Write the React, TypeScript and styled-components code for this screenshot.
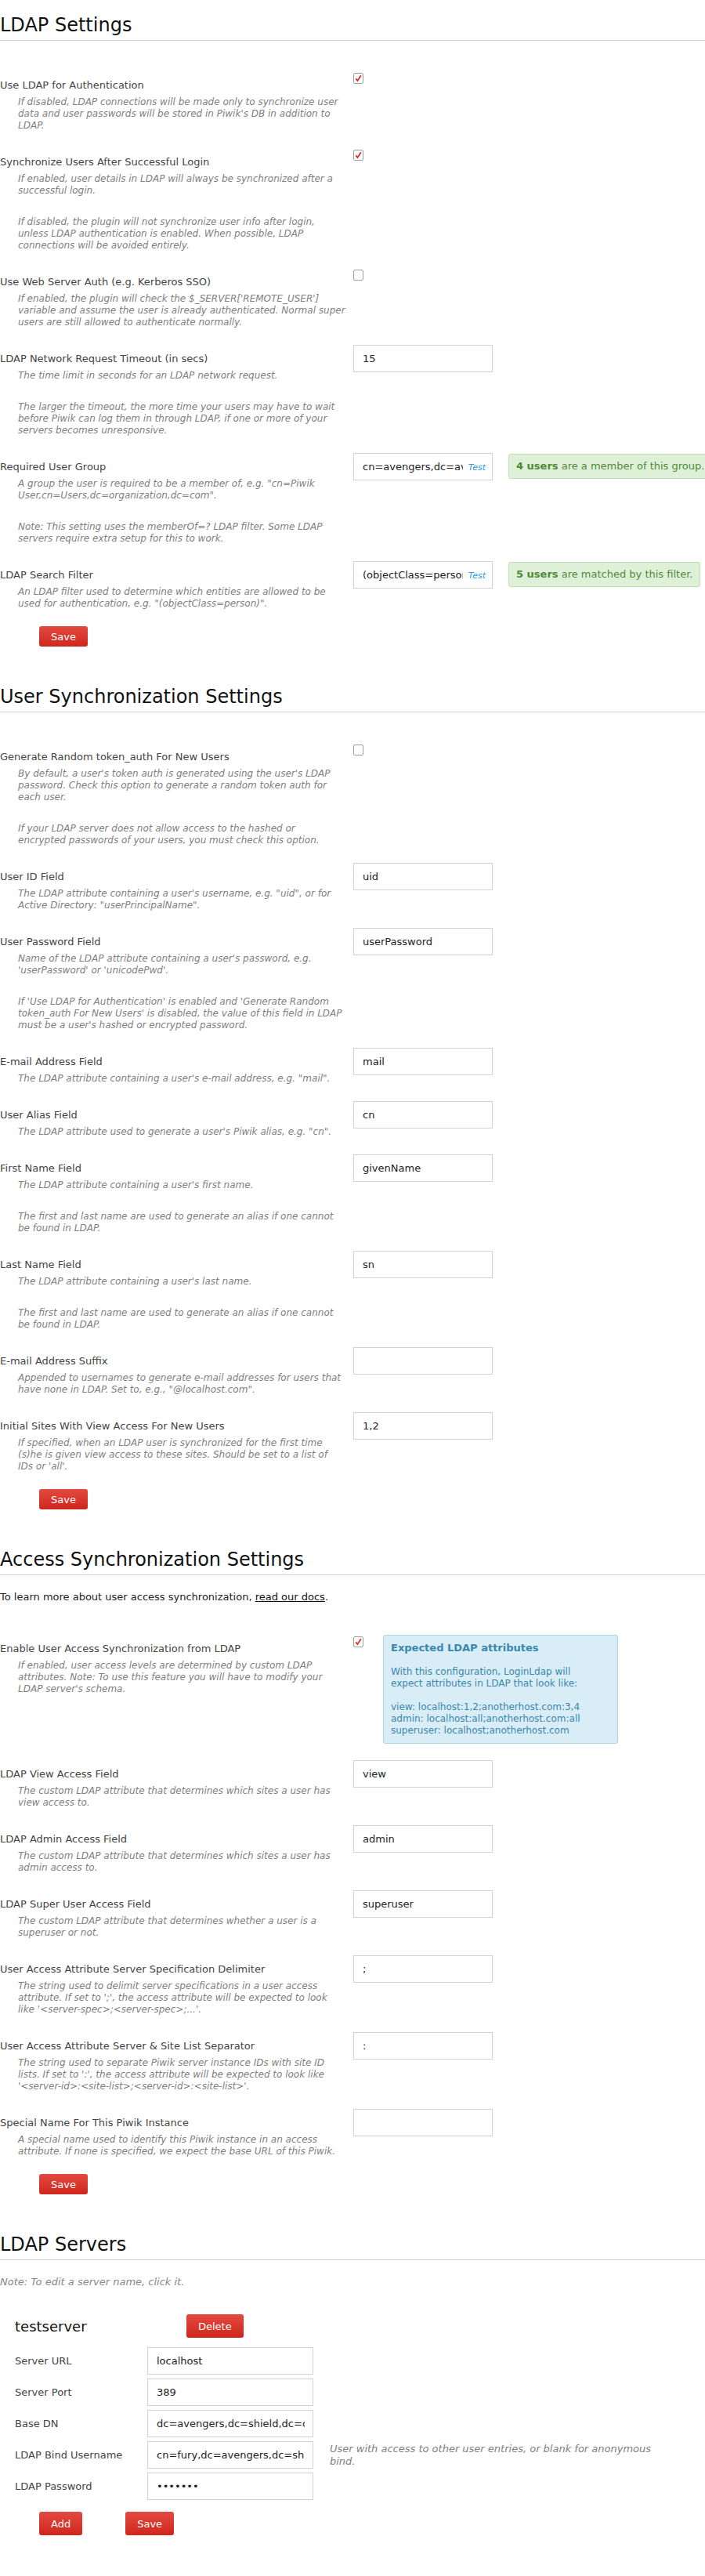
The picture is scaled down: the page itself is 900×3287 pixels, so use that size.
import type { ReactNode } from "react";
import styled, { createGlobalStyle } from "styled-components";

type Field = {
  label: string;
  help: string[];
  checkbox?: boolean;
  checked?: boolean;
  value?: string;
  test?: boolean;
  result?: ReactNode;
  notice?: boolean;
};

// help paragraphs keep the line breaks of the original form
const ldapSettings: Field[] = [
  {
    label: "Use LDAP for Authentication",
    checkbox: true,
    checked: true,
    help: [
      "If disabled, LDAP connections will be made only to synchronize user\ndata and user passwords will be stored in Piwik's DB in addition to\nLDAP.",
    ],
  },
  {
    label: "Synchronize Users After Successful Login",
    checkbox: true,
    checked: true,
    help: [
      "If enabled, user details in LDAP will always be synchronized after a\nsuccessful login.",
      "If disabled, the plugin will not synchronize user info after login,\nunless LDAP authentication is enabled. When possible, LDAP\nconnections will be avoided entirely.",
    ],
  },
  {
    label: "Use Web Server Auth (e.g. Kerberos SSO)",
    checkbox: true,
    help: [
      "If enabled, the plugin will check the $_SERVER['REMOTE_USER']\nvariable and assume the user is already authenticated. Normal super\nusers are still allowed to authenticate normally.",
    ],
  },
  {
    label: "LDAP Network Request Timeout (in secs)",
    value: "15",
    help: [
      "The time limit in seconds for an LDAP network request.",
      "The larger the timeout, the more time your users may have to wait\nbefore Piwik can log them in through LDAP, if one or more of your\nservers becomes unresponsive.",
    ],
  },
  {
    label: "Required User Group",
    value: "cn=avengers,dc=avengers,dc=shield,dc=org",
    test: true,
    result: (
      <>
        <strong>4 users</strong> are a member of this group.
      </>
    ),
    help: [
      'A group the user is required to be a member of, e.g. "cn=Piwik\nUser,cn=Users,dc=organization,dc=com".',
      "Note: This setting uses the memberOf=? LDAP filter. Some LDAP\nservers require extra setup for this to work.",
    ],
  },
  {
    label: "LDAP Search Filter",
    value: "(objectClass=person)",
    test: true,
    result: (
      <>
        <strong>5 users</strong> are matched by this filter.
      </>
    ),
    help: [
      'An LDAP filter used to determine which entities are allowed to be\nused for authentication, e.g. "(objectClass=person)".',
    ],
  },
];

const userSyncSettings: Field[] = [
  {
    label: "Generate Random token_auth For New Users",
    checkbox: true,
    help: [
      "By default, a user's token auth is generated using the user's LDAP\npassword. Check this option to generate a random token auth for\neach user.",
      "If your LDAP server does not allow access to the hashed or\nencrypted passwords of your users, you must check this option.",
    ],
  },
  {
    label: "User ID Field",
    value: "uid",
    help: [
      'The LDAP attribute containing a user\'s username, e.g. "uid", or for\nActive Directory: "userPrincipalName".',
    ],
  },
  {
    label: "User Password Field",
    value: "userPassword",
    help: [
      "Name of the LDAP attribute containing a user's password, e.g.\n'userPassword' or 'unicodePwd'.",
      "If 'Use LDAP for Authentication' is enabled and 'Generate Random\ntoken_auth For New Users' is disabled, the value of this field in LDAP\nmust be a user's hashed or encrypted password.",
    ],
  },
  {
    label: "E-mail Address Field",
    value: "mail",
    help: ['The LDAP attribute containing a user\'s e-mail address, e.g. "mail".'],
  },
  {
    label: "User Alias Field",
    value: "cn",
    help: ['The LDAP attribute used to generate a user\'s Piwik alias, e.g. "cn".'],
  },
  {
    label: "First Name Field",
    value: "givenName",
    help: [
      "The LDAP attribute containing a user's first name.",
      "The first and last name are used to generate an alias if one cannot\nbe found in LDAP.",
    ],
  },
  {
    label: "Last Name Field",
    value: "sn",
    help: [
      "The LDAP attribute containing a user's last name.",
      "The first and last name are used to generate an alias if one cannot\nbe found in LDAP.",
    ],
  },
  {
    label: "E-mail Address Suffix",
    value: "",
    help: [
      'Appended to usernames to generate e-mail addresses for users that\nhave none in LDAP. Set to, e.g., "@localhost.com".',
    ],
  },
  {
    label: "Initial Sites With View Access For New Users",
    value: "1,2",
    help: [
      "If specified, when an LDAP user is synchronized for the first time\n(s)he is given view access to these sites. Should be set to a list of\nIDs or 'all'.",
    ],
  },
];

const accessSyncSettings: Field[] = [
  {
    label: "Enable User Access Synchronization from LDAP",
    checkbox: true,
    checked: true,
    notice: true,
    help: [
      "If enabled, user access levels are determined by custom LDAP\nattributes. Note: To use this feature you will have to modify your\nLDAP server's schema.",
    ],
  },
  {
    label: "LDAP View Access Field",
    value: "view",
    help: ["The custom LDAP attribute that determines which sites a user has\nview access to."],
  },
  {
    label: "LDAP Admin Access Field",
    value: "admin",
    help: ["The custom LDAP attribute that determines which sites a user has\nadmin access to."],
  },
  {
    label: "LDAP Super User Access Field",
    value: "superuser",
    help: ["The custom LDAP attribute that determines whether a user is a\nsuperuser or not."],
  },
  {
    label: "User Access Attribute Server Specification Delimiter",
    value: ";",
    help: [
      "The string used to delimit server specifications in a user access\nattribute. If set to ';', the access attribute will be expected to look\nlike '<server-spec>;<server-spec>;...'.",
    ],
  },
  {
    label: "User Access Attribute Server & Site List Separator",
    value: ":",
    help: [
      "The string used to separate Piwik server instance IDs with site ID\nlists. If set to ':', the access attribute will be expected to look like\n'<server-id>:<site-list>;<server-id>:<site-list>'.",
    ],
  },
  {
    label: "Special Name For This Piwik Instance",
    value: "",
    help: [
      "A special name used to identify this Piwik instance in an access\nattribute. If none is specified, we expect the base URL of this Piwik.",
    ],
  },
];

const serverFields = [
  { label: "Server URL", value: "localhost" },
  { label: "Server Port", value: "389" },
  { label: "Base DN", value: "dc=avengers,dc=shield,dc=org" },
  {
    label: "LDAP Bind Username",
    value: "cn=fury,dc=avengers,dc=shield,dc=org",
    help: "User with access to other user entries, or blank for anonymous\nbind.",
  },
  { label: "LDAP Password", value: "secrets", password: true },
];

const CheckMark = () => (
  <svg width="13" height="14" viewBox="0 0 13 14">
    <path d="M3.2 7.2 L5.4 10 L9.8 3.2" fill="none" stroke="#d62a1f" strokeWidth="1.7" />
  </svg>
);

const SettingRow = ({ field }: { field: Field }) => (
  <Row>
    <FieldText>
      <Label>{field.label}</Label>
      <Help>
        {field.help.map((p, i) => (
          <HelpPara key={i}>{p}</HelpPara>
        ))}
      </Help>
    </FieldText>
    <Control>
      {field.checkbox ? (
        <Checkbox role="checkbox" aria-checked={!!field.checked}>
          {field.checked && <CheckMark />}
        </Checkbox>
      ) : (
        <InputWrap>
          <TextInput $withTest={!!field.test} value={field.value} readOnly />
          {field.test && <TestLink>Test</TestLink>}
        </InputWrap>
      )}
      {field.result && <Result>{field.result}</Result>}
      {field.notice && (
        <InfoBox>
          <InfoTitle>Expected LDAP attributes</InfoTitle>
          With this configuration, LoginLdap will
          <br />
          expect attributes in LDAP that look like:
          <br />
          <br />
          view: localhost:1,2;anotherhost.com:3,4
          <br />
          admin: localhost:all;anotherhost.com:all
          <br />
          superuser: localhost;anotherhost.com
        </InfoBox>
      )}
    </Control>
  </Row>
);

const App = () => {
  return (
    <>
      <GlobalStyle />
      <Page>
        <Section>
          <Heading>LDAP Settings</Heading>
          <Rows>
            {ldapSettings.map((f) => (
              <SettingRow key={f.label} field={f} />
            ))}
          </Rows>
          <SaveBar>
            <Button>Save</Button>
          </SaveBar>
        </Section>

        <Section>
          <Heading>User Synchronization Settings</Heading>
          <Rows>
            {userSyncSettings.map((f) => (
              <SettingRow key={f.label} field={f} />
            ))}
          </Rows>
          <SaveBar>
            <Button>Save</Button>
          </SaveBar>
        </Section>

        <Section>
          <Heading>Access Synchronization Settings</Heading>
          <Intro>
            To learn more about user access synchronization, <DocLink href="#">read our docs</DocLink>.
          </Intro>
          <Rows>
            {accessSyncSettings.map((f) => (
              <SettingRow key={f.label} field={f} />
            ))}
          </Rows>
          <SaveBar>
            <Button>Save</Button>
          </SaveBar>
        </Section>

        <Section>
          <Heading>LDAP Servers</Heading>
          <Intro $note>Note: To edit a server name, click it.</Intro>
          <ServerHeader>
            <ServerName>testserver</ServerName>
            <Button $large>Delete</Button>
          </ServerHeader>
          <ServerGrid>
            {serverFields.map((f) => (
              <ServerRow key={f.label}>
                <ServerLabel>{f.label}</ServerLabel>
                <ServerInput type={f.password ? "password" : "text"} value={f.value} readOnly />
                {f.help ? <ServerHelp>{f.help}</ServerHelp> : <span />}
              </ServerRow>
            ))}
          </ServerGrid>
          <ServerActions>
            <Button $large>Add</Button>
            <Button $large>Save</Button>
          </ServerActions>
        </Section>
      </Page>
    </>
  );
};

export default App;

const GlobalStyle = createGlobalStyle`
  html, body {
    margin: 0;
    padding: 0;
    background: #fff;
  }
  body {
    font-family: "DejaVu Sans", Verdana, sans-serif;
    font-size: 13px;
    color: #444;
  }
`;

const Page = styled.div`
  width: 900px;
  padding: 18px 0 50px;
`;

const Section = styled.section`
  & + & {
    padding-top: 50px;
  }
`;

const Heading = styled.h2`
  margin: 0;
  padding-bottom: 5px;
  border-bottom: 1px solid #cfcfcf;
  font-size: 24px;
  line-height: 28px;
  font-weight: normal;
  color: #111;
`;

const Intro = styled.p<{ $note?: boolean }>`
  margin: 20px 0 1px;
  line-height: 16px;
  font-size: 13px;
  color: ${(p) => (p.$note ? "#888" : "#222")};
  font-style: ${(p) => (p.$note ? "italic" : "normal")};
`;

const DocLink = styled.a`
  color: #111;
  text-decoration: underline;
`;

const Rows = styled.div`
  padding-top: 39px;
`;

const Row = styled.div`
  display: grid;
  grid-template-columns: 440px 1fr;
  column-gap: 11px;
  margin-bottom: 21px;
`;

const FieldText = styled.div`
  padding-top: 10px;
`;

const Label = styled.div`
  line-height: 16px;
  color: #444;
`;

const Help = styled.div`
  margin-top: 6px;
  padding-left: 23px;
  font-size: 12px;
  line-height: 15px;
  font-style: italic;
  color: #808080;
  white-space: pre;
`;

const HelpPara = styled.div`
  & + & {
    margin-top: 25px;
  }
`;

const Control = styled.div`
  display: flex;
  align-items: flex-start;
`;

const Checkbox = styled.span`
  display: block;
  box-sizing: border-box;
  width: 13px;
  height: 14px;
  margin-top: 2px;
  border: 1px solid #9d9d9d;
  border-radius: 2px;
  background: #fff;
  line-height: 0;

  svg {
    margin: -1px 0 0 -1px;
  }
`;

const InputWrap = styled.div`
  position: relative;
`;

const TextInput = styled.input<{ $withTest?: boolean }>`
  display: block;
  box-sizing: border-box;
  width: 178px;
  height: 35px;
  margin: 0;
  padding: 0 ${(p) => (p.$withTest ? "37px" : "10px")} 0 11px;
  border: 1px solid #d2d2d2;
  border-radius: 0;
  outline: none;
  font-family: inherit;
  font-size: 13px;
  color: #222;
  background: #fff;
`;

const TestLink = styled.span`
  position: absolute;
  right: 9px;
  top: 12px;
  font-size: 11px;
  line-height: 13px;
  font-style: italic;
  color: #2f98d8;
  cursor: pointer;
`;

const Result = styled.div`
  margin: 1px 0 0 20px;
  padding: 7px 9px;
  line-height: 16px;
  font-size: 13px;
  color: #4f8a3a;
  background: #dff0d8;
  border: 1px solid #c0dfae;
  border-radius: 3px;
  white-space: nowrap;

  strong {
    font-weight: bold;
  }
`;

const InfoBox = styled.div`
  box-sizing: border-box;
  width: 300px;
  margin-left: 25px;
  padding: 8px 9px 8px;
  font-size: 12px;
  line-height: 15px;
  color: #3a87ad;
  background: #d9edf7;
  border: 1px solid #a9d3e6;
  border-radius: 3px;
`;

const InfoTitle = styled.div`
  margin-bottom: 15px;
  font-size: 13px;
  line-height: 16px;
  font-weight: bold;
`;

const Button = styled.button<{ $large?: boolean }>`
  height: ${(p) => (p.$large ? "30px" : "26px")};
  padding: 0 15px;
  border: none;
  border-radius: 3px;
  background: linear-gradient(#e24a40, #d0261c);
  color: #fff;
  font-family: inherit;
  font-size: 13px;
  line-height: 1;
  cursor: pointer;
`;

const SaveBar = styled.div`
  margin: 8px 0 0 50px;
  line-height: 0;
`;

const ServerHeader = styled.div`
  display: flex;
  align-items: center;
  margin-top: 33px;
  padding-left: 19px;
`;

const ServerName = styled.div`
  min-width: 219px;
  font-size: 18px;
  color: #111;
`;

const ServerGrid = styled.div`
  display: grid;
  row-gap: 5px;
  margin-top: 12px;
  padding-left: 19px;
`;

const ServerRow = styled.div`
  display: grid;
  grid-template-columns: 169px 212px 1fr;
  align-items: center;
`;

const ServerLabel = styled.div`
  line-height: 16px;
  color: #444;
`;

const ServerInput = styled.input`
  display: block;
  box-sizing: border-box;
  width: 212px;
  height: 35px;
  margin: 0;
  padding: 0 10px 0 11px;
  border: 1px solid #d2d2d2;
  border-radius: 0;
  outline: none;
  font-family: inherit;
  font-size: 13px;
  color: #222;
  background: #fff;
`;

const ServerHelp = styled.div`
  align-self: start;
  margin: 2px 0 0 21px;
  font-size: 13px;
  line-height: 16px;
  font-style: italic;
  color: #808080;
  white-space: pre;
`;

const ServerActions = styled.div`
  display: flex;
  gap: 55px;
  margin-top: 15px;
  padding-left: 50px;
`;
